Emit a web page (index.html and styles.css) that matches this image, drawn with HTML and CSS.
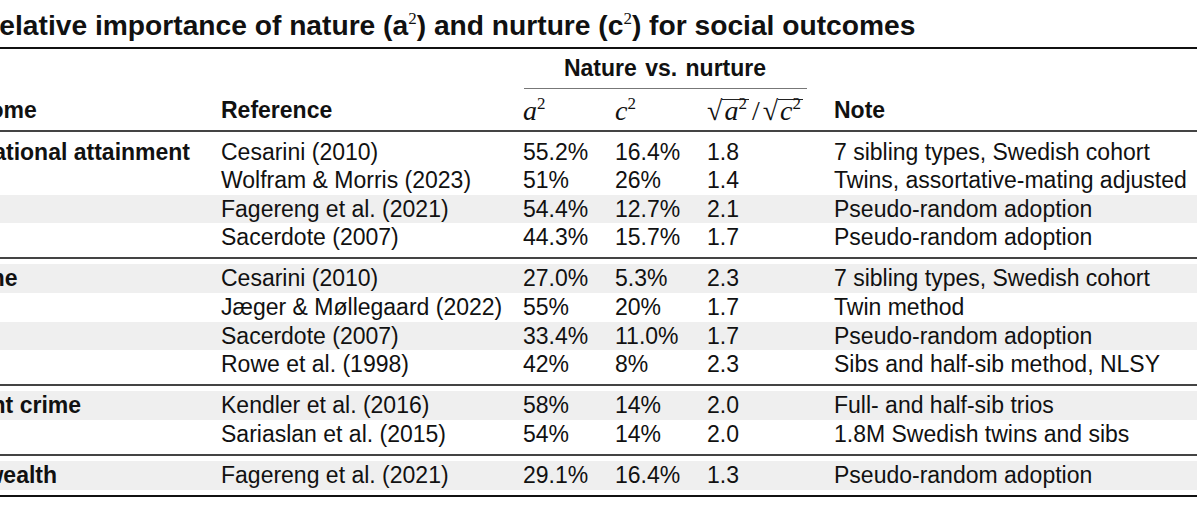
FILE: index.html
```html
<!DOCTYPE html>
<html lang="en">
<head>
<meta charset="utf-8">
<title>Relative importance of nature and nurture for social outcomes</title>
<link rel="stylesheet" href="styles.css">
</head>
<body>
<div class="page">
  <h1 class="title">Relative importance of nature (a<sup class="tsup">2</sup>) and nurture (c<sup class="tsup">2</sup>) for social outcomes</h1>
  <div class="tbl">
    <div class="rule top"></div>
    <div class="row head1">
      <div class="cell"></div>
      <div class="cell"></div>
      <div class="cell span3 b">Nature vs. nurture</div>
      <div class="cell"></div>
    </div>
    <div class="cmid-row"><div></div><div></div><div class="cmid"></div><div></div></div>
    <div class="row head2">
      <div class="cell b">Outcome</div>
      <div class="cell b">Reference</div>
      <div class="cell math"><i>a</i><sup>2</sup></div>
      <div class="cell math"><i>c</i><sup>2</sup></div>
      <div class="cell math"><span class="rad">√</span><span class="ov"><i>a</i><sup>2</sup></span><span class="sl">/</span><span class="rad">√</span><span class="ov"><i>c</i><sup>2</sup></span></div>
      <div class="cell b">Note</div>
    </div>
    <div class="rule mid"></div>

    <div class="row">
      <div class="cell b">Educational attainment</div>
      <div class="cell">Cesarini (2010)</div>
      <div class="cell">55.2%</div>
      <div class="cell">16.4%</div>
      <div class="cell">1.8</div>
      <div class="cell">7 sibling types, Swedish cohort</div>
    </div>
    <div class="row">
      <div class="cell"></div>
      <div class="cell">Wolfram &amp; Morris (2023)</div>
      <div class="cell">51%</div>
      <div class="cell">26%</div>
      <div class="cell">1.4</div>
      <div class="cell">Twins, assortative-mating adjusted</div>
    </div>
    <div class="row shade">
      <div class="cell"></div>
      <div class="cell">Fagereng et al. (2021)</div>
      <div class="cell">54.4%</div>
      <div class="cell">12.7%</div>
      <div class="cell">2.1</div>
      <div class="cell">Pseudo-random adoption</div>
    </div>
    <div class="row">
      <div class="cell"></div>
      <div class="cell">Sacerdote (2007)</div>
      <div class="cell">44.3%</div>
      <div class="cell">15.7%</div>
      <div class="cell">1.7</div>
      <div class="cell">Pseudo-random adoption</div>
    </div>
    <div class="rule sep"></div>

    <div class="row shade">
      <div class="cell b">Income</div>
      <div class="cell">Cesarini (2010)</div>
      <div class="cell">27.0%</div>
      <div class="cell">5.3%</div>
      <div class="cell">2.3</div>
      <div class="cell">7 sibling types, Swedish cohort</div>
    </div>
    <div class="row">
      <div class="cell"></div>
      <div class="cell">Jæger &amp; Møllegaard (2022)</div>
      <div class="cell">55%</div>
      <div class="cell">20%</div>
      <div class="cell">1.7</div>
      <div class="cell">Twin method</div>
    </div>
    <div class="row shade">
      <div class="cell"></div>
      <div class="cell">Sacerdote (2007)</div>
      <div class="cell">33.4%</div>
      <div class="cell">11.0%</div>
      <div class="cell">1.7</div>
      <div class="cell">Pseudo-random adoption</div>
    </div>
    <div class="row">
      <div class="cell"></div>
      <div class="cell">Rowe et al. (1998)</div>
      <div class="cell">42%</div>
      <div class="cell">8%</div>
      <div class="cell">2.3</div>
      <div class="cell">Sibs and half-sib method, NLSY</div>
    </div>
    <div class="rule sep"></div>

    <div class="row shade">
      <div class="cell b">Violent crime</div>
      <div class="cell">Kendler et al. (2016)</div>
      <div class="cell">58%</div>
      <div class="cell">14%</div>
      <div class="cell">2.0</div>
      <div class="cell">Full- and half-sib trios</div>
    </div>
    <div class="row">
      <div class="cell"></div>
      <div class="cell">Sariaslan et al. (2015)</div>
      <div class="cell">54%</div>
      <div class="cell">14%</div>
      <div class="cell">2.0</div>
      <div class="cell">1.8M Swedish twins and sibs</div>
    </div>
    <div class="rule sep"></div>

    <div class="row shade">
      <div class="cell b wide-space">Net wealth</div>
      <div class="cell">Fagereng et al. (2021)</div>
      <div class="cell">29.1%</div>
      <div class="cell">16.4%</div>
      <div class="cell">1.3</div>
      <div class="cell">Pseudo-random adoption</div>
    </div>
    <div class="rule bottom"></div>
  </div>
</div>
</body>
</html>
```

FILE: styles.css
```css
html, body {
  margin: 0;
  padding: 0;
  background: #ffffff;
}

body {
  width: 1200px;
  height: 523px;
  overflow: hidden;
  color: #111111;
  font-family: "Liberation Sans", Arial, sans-serif;
}

.page {
  width: 1200px;
}

.title {
  margin: 0 0 0 -21px;
  padding-top: 10px;
  height: 30px;
  line-height: 30px;
  font-size: 28.2px;
  font-weight: bold;
  white-space: nowrap;
}

.tsup {
  font-family: "Liberation Serif", serif;
  font-weight: normal;
  font-size: 17px;
  vertical-align: 11px;
  line-height: 0;
}

.tbl {
  margin-left: -63px;
  width: 1260px;
}

.row,
.cmid-row {
  display: grid;
  grid-template-columns: 284px 302px 92px 92px 127px 363px;
}

.cmid-row {
  grid-template-columns: 284px 302px 284px 390px;
}

.row {
  height: 28.6px;
  line-height: 28.6px;
  font-size: 23px;
  white-space: nowrap;
}

.row.shade {
  background: #efefef;
}

.b {
  font-weight: bold;
}

.wide-space {
  word-spacing: 5px;
}

.head1 {
  grid-template-columns: 284px 302px 284px 390px;
  height: 29px;
  line-height: 29px;
  padding: 5px 0 5px;
}

.span3 {
  text-align: center;
  word-spacing: 2px;
}

.cmid {
  height: 1px;
  background: #777;
  margin-left: 1px;
}

.head2 {
  height: 29px;
  line-height: 29px;
  padding: 7px 0 5px;
}

.math {
  font-family: "Liberation Serif", "DejaVu Serif", serif;
  font-size: 28px;
}

.math i {
  font-style: italic;
}

.math sup {
  font-size: 17px;
  vertical-align: 11px;
  line-height: 0;
}

.rad {
  font-style: normal;
  font-size: 28px;
}

.ov {
  display: inline-block;
  border-top: 1px solid #222;
  line-height: 22px;
  padding: 0 2px 0 2px;
}

.sl {
  padding: 0 3px;
}

.rule {
  width: 100%;
}

.rule.top {
  height: 2px;
  background: #111;
  margin-top: 7px;
}

.rule.mid {
  height: 1.5px;
  background: #444;
  margin-bottom: 6px;
}

.rule.sep {
  height: 1.5px;
  background: #444;
  margin: 5.6px 0 5.5px;
}

.rule.bottom {
  height: 2px;
  background: #111;
  margin-top: 5px;
}
```
